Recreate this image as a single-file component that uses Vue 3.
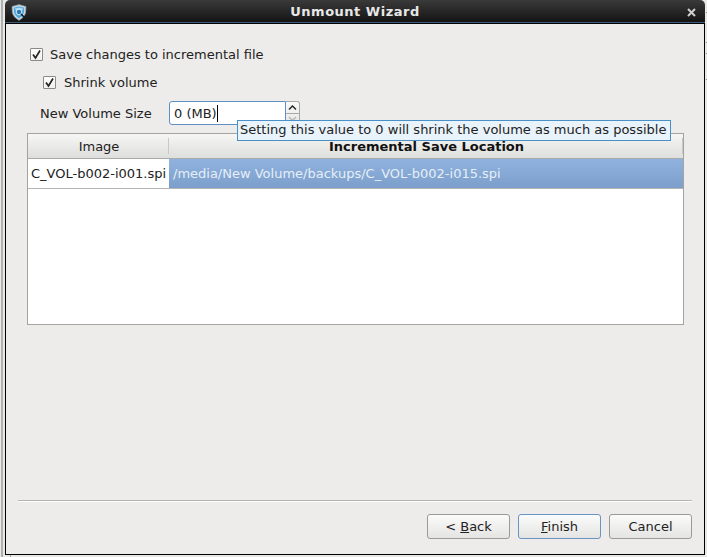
<template>
  <div class="desktop">
    <div class="edge-strip"></div>
    <i v-for="y in edgeTicks" :key="y" class="edge-tick" :style="{ top: y + 'px' }"></i>
    <i class="bottom-tick"></i>
    <div class="window">
      <div class="titlebar">
        <svg class="app-icon" width="16" height="17" viewBox="0 0 16 17">
          <path d="M1 2.5 L8 .6 L15 2.5 L14.6 9 Q13.5 13.5 8 16.4 Q2.5 13.5 1.4 9 Z" fill="#cfd8dc" stroke="#7f929c" stroke-width="0.7" />
          <path d="M2.8 3.8 L8 2.4 L13.2 3.8 L12.9 8.8 Q12 12 8 14.4 Q4 12 3.1 8.8 Z" fill="#4ba6e2" />
          <path d="M4 4.6 L8 3.6 L12 4.6 L11.8 6 L4.2 6 Z" fill="#a8d8f5" />
          <circle cx="8" cy="8" r="2.8" fill="#2a78b4" stroke="#d8eef9" stroke-width="1" />
          <path d="M10 10 L14.5 14.5" stroke="#0c1c24" stroke-width="1.6" />
        </svg>
        <span class="title">Unmount Wizard</span>
        <svg class="close" width="9" height="9" viewBox="0 0 9 9">
          <path d="M1 1 L8 8 M8 1 L1 8" stroke="#cfcfcf" stroke-width="2" />
        </svg>
      </div>
      <div class="content">
        <label class="check-row first">
          <span class="checkbox"><svg width="11" height="11" viewBox="0 0 11 11"><path d="M2 5.5 L4.5 9 L9 1.5" fill="none" stroke="#222" stroke-width="1.7" /></svg></span>
          <span>Save changes to incremental file</span>
        </label>
        <label class="check-row second">
          <span class="checkbox"><svg width="11" height="11" viewBox="0 0 11 11"><path d="M2 5.5 L4.5 9 L9 1.5" fill="none" stroke="#222" stroke-width="1.7" /></svg></span>
          <span>Shrink volume</span>
        </label>
        <div class="size-row">
          <span class="size-label">New Volume Size</span>
          <div class="spin">
            <div class="spin-input"><span>0 (MB)</span><i class="caret"></i></div>
            <div class="spin-buttons">
              <div class="spin-btn">
                <svg width="9" height="5" viewBox="0 0 9 5"><path d="M1 4.5 L4.5 1 L8 4.5" fill="none" stroke="#222" stroke-width="1.4" /></svg>
              </div>
              <div class="spin-btn">
                <svg width="9" height="5" viewBox="0 0 9 5"><path d="M1 1 L4.5 4.5 L8 1" fill="none" stroke="#b5b5b3" stroke-width="1.4" /></svg>
              </div>
            </div>
          </div>
        </div>
        <div class="tooltip">Setting this value to 0 will shrink the volume as much as possible</div>
        <div class="table">
          <div class="thead">
            <div class="th image-col"><span>Image</span></div>
            <div class="th loc-col"><span>Incremental Save Location</span></div>
          </div>
          <div class="tr">
            <div class="td image-col">{{ row.image }}</div>
            <div class="td loc-col selected">{{ row.location }}</div>
          </div>
        </div>
        <div class="spacer"></div>
        <div class="separator"></div>
        <div class="buttons">
          <button class="btn"><span>&lt; <u>B</u>ack</span></button>
          <button class="btn focused"><span><u>F</u>inish</span></button>
          <button class="btn">Cancel</button>
        </div>
      </div>
    </div>
  </div>
</template>

<script setup>
const row = {
  image: 'C_VOL-b002-i001.spi',
  location: '/media/New Volume/backups/C_VOL-b002-i015.spi'
}

// bits of the window behind, showing past the right edge
const edgeTicks = [12, 42, 53, 79]
</script>

<style>
html, body {
  margin: 0;
  height: 100%;
  overflow: hidden;
}
</style>

<style scoped>
.desktop {
  width: 707px;
  height: 557px;
  background: #e8e8e6;
  display: flex;
  padding: 0 2px 0 5px;
  box-sizing: border-box;
  position: relative;
  overflow: hidden;
}

.edge-strip {
  position: absolute;
  left: 1px;
  top: 0;
  bottom: 0;
  width: 2px;
  background: #b0b0ae;
}

.edge-tick {
  position: absolute;
  right: 0;
  width: 1px;
  height: 1px;
  background: #8a8a88;
}

.bottom-tick {
  position: absolute;
  left: 10px;
  bottom: 0;
  width: 1px;
  height: 2px;
  background: #a8a8a6;
}

.window {
  flex: 1;
  display: flex;
  flex-direction: column;
  height: 555px;
  font-family: "DejaVu Sans", sans-serif;
  font-size: 13px;
  color: #222;
  position: relative;
}

.titlebar {
  height: 22px;
  background: linear-gradient(#3a3a3a, #141414);
  border-radius: 5px 5px 0 0;
  border-bottom: 1px solid #3f5c78;
  display: flex;
  align-items: center;
  justify-content: center;
  position: relative;
  color: #e8e8e8;
  font-weight: bold;
  font-size: 13px;
  letter-spacing: 0.5px;
}

.app-icon {
  position: absolute;
  left: 6px;
  top: 4px;
}

.close {
  position: absolute;
  right: 9px;
  top: 8px;
}

.content {
  flex: 1;
  background: #edecea;
  border: 1px solid #000;
  border-width: 0 1px 1px 1px;
  box-shadow: inset 0 1px 0 #000;
  display: flex;
  flex-direction: column;
  position: relative;
  min-height: 0;
}

.check-row {
  display: flex;
  align-items: center;
  height: 18px;
}

.check-row.first {
  gap: 7px;
  margin: 22px 0 0 24px;
}

.check-row.second {
  gap: 8px;
  margin: 10px 0 0 37px;
}

.checkbox {
  width: 11px;
  height: 11px;
  border: 1px solid #8a8a88;
  border-radius: 1px;
  background: linear-gradient(#fff, #f0f0ee);
  display: flex;
}

.size-row {
  display: flex;
  align-items: center;
  margin: 10px 0 0 34px;
  height: 24px;
}

.size-label {
  width: 129px;
}

.spin {
  display: flex;
  width: 131px;
  height: 24px;
}

.spin-input {
  flex: 1;
  border: 1px solid #5f8fc4;
  border-radius: 3px 0 0 3px;
  background: #fff;
  display: flex;
  align-items: center;
  padding-left: 4px;
}

.caret {
  display: block;
  width: 1px;
  height: 17px;
  background: #000;
}

.spin-buttons {
  width: 13px;
  border: 1px solid #a8a8a6;
  border-left: 0;
  border-radius: 0 3px 3px 0;
  background: linear-gradient(#fafafa, #e6e6e4);
  display: flex;
  flex-direction: column;
}

.spin-btn {
  flex: 1;
  display: flex;
  align-items: center;
  justify-content: center;
}

.spin-btn:first-child {
  border-bottom: 1px solid #a8a8a6;
}

.tooltip {
  position: absolute;
  left: 231px;
  top: 97px;
  height: 19px;
  line-height: 18px;
  padding: 0 4px 0 2px;
  background: #e9f3fb;
  border: 1px solid #4a90c8;
  white-space: nowrap;
  color: #222;
  z-index: 2;
}

.table {
  margin: 8px 20px 0 21px;
  height: 192px;
  border: 1px solid #a3a3a1;
  background: #fff;
  box-sizing: border-box;
}

.thead {
  display: flex;
  height: 24px;
  background: linear-gradient(#f6f6f4, #dededc);
  border-bottom: 1px solid #aaa;
}

.th {
  display: flex;
  align-items: center;
  justify-content: center;
  border-right: 1px solid #c8c8c6;
  margin: 4px 0;
}

.th.image-col {
  padding-left: 2px;
  box-sizing: border-box;
}

.th.loc-col {
  padding-left: 2px;
  font-weight: bold;
  color: #111;
}

.image-col {
  width: 141px;
  flex-shrink: 0;
}

.loc-col {
  flex: 1;
}

.tr {
  display: flex;
  height: 29px;
  border-bottom: 1px solid #b4b4b2;
}

.td {
  display: flex;
  align-items: center;
  padding-left: 3px;
  box-sizing: border-box;
}

.td.selected {
  padding-left: 4px;
  background: linear-gradient(#8fb3de, #7c9ecb);
  color: #e6eef8;
}

.spacer {
  flex: 1;
}

.separator {
  height: 1px;
  background: #b4b4b2;
  margin: 0 12px;
  box-shadow: 0 1px 0 #fff;
}

.buttons {
  display: flex;
  justify-content: flex-end;
  gap: 8px;
  margin: 13px 12px 15px 0;
}

.btn {
  width: 83px;
  height: 25px;
  font: inherit;
  color: #222;
  background: linear-gradient(#fbfbfb, #e4e4e2);
  border: 1px solid #9a9a98;
  border-radius: 3px;
  padding: 0;
}

.btn.focused {
  border-color: #6a94c4;
}
</style>
